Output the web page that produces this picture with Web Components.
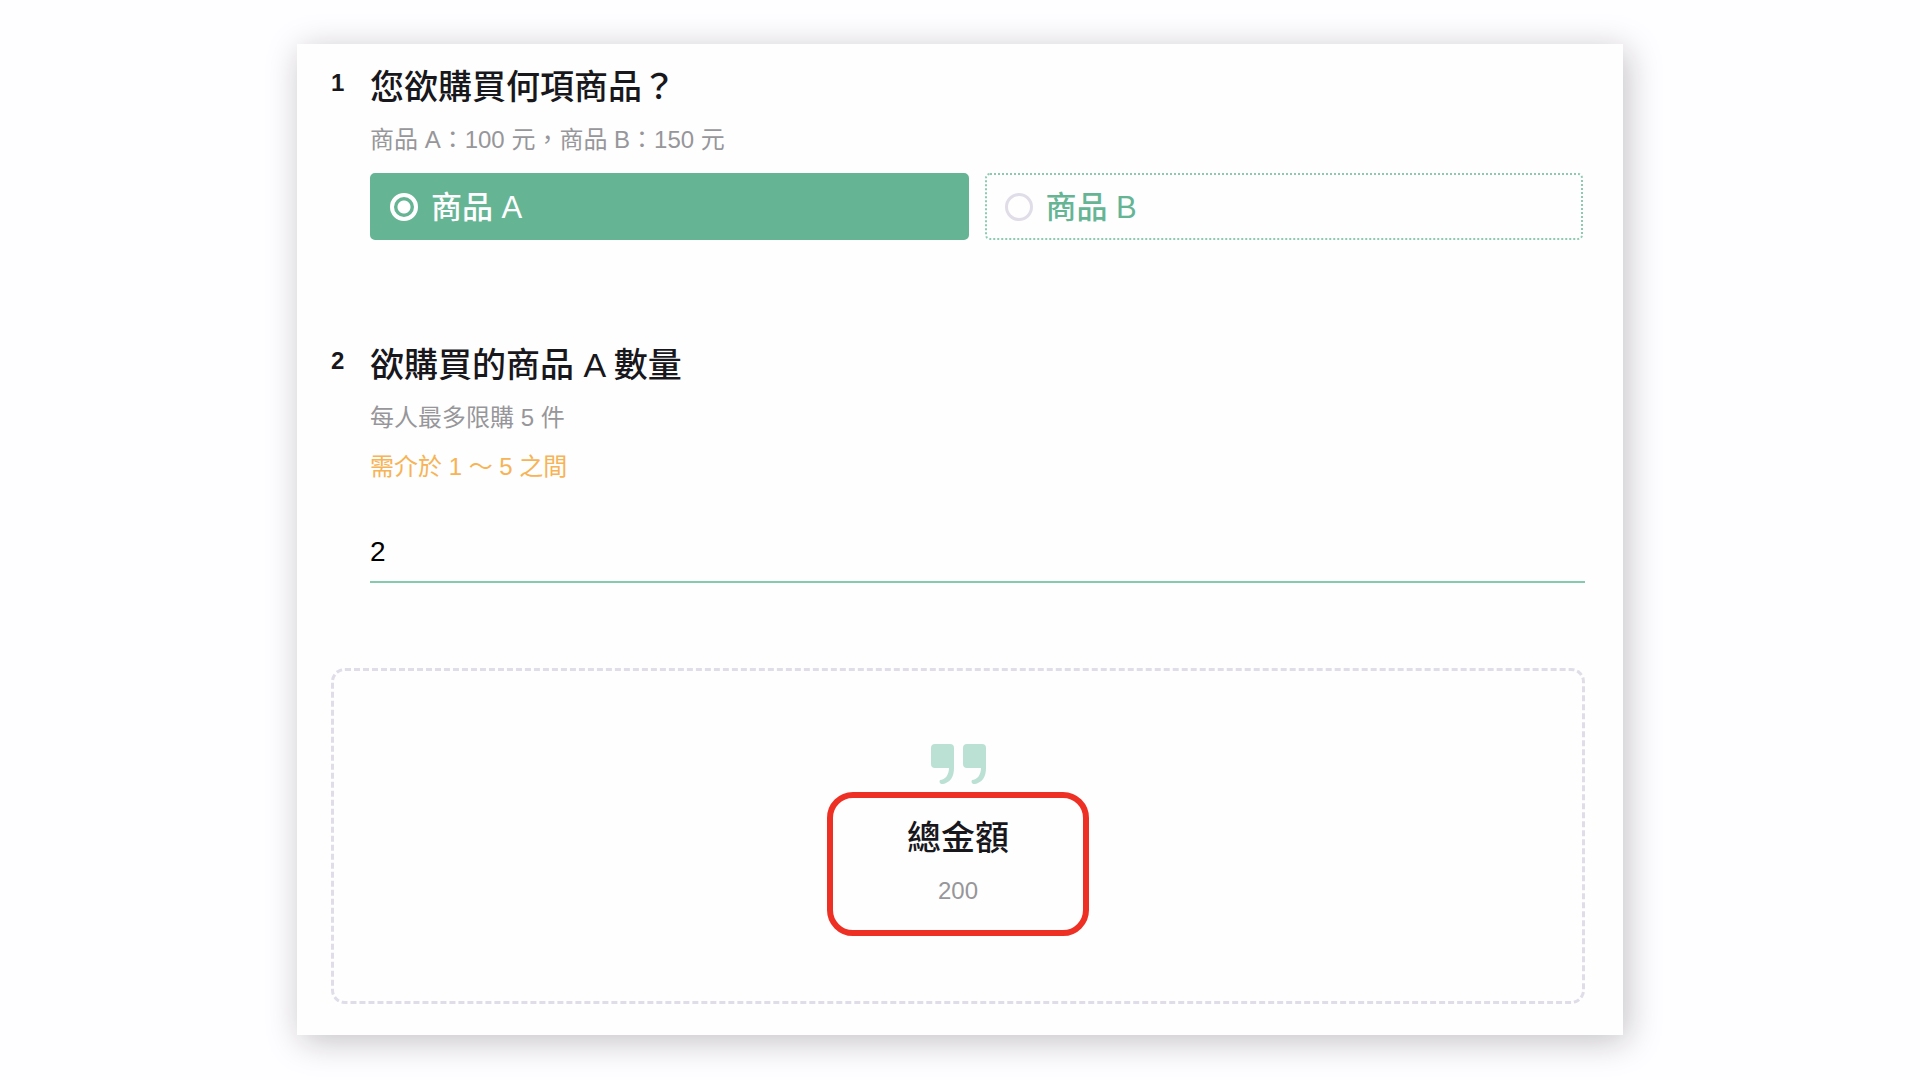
<!DOCTYPE html>
<html lang="zh-Hant">
<head>
<meta charset="utf-8">
<meta name="viewport" content="width=device-width, initial-scale=1">
<title>商品訂購</title>
<style>
  body {
    margin: 0;
    padding: 44px 24px;
    background: #fefdff;
    color: #18171c;
    font-family: "Liberation Sans", "Noto Sans CJK TC", sans-serif;
    --green: #65b595;
    --green-light: #bbe0d4;
    --line: #85c9af;
    --dots: #8ccbb2;
    --muted: #97969a;
    --warn: #f7b354;
    --border: #e0dde8;
    --mark: #ee3024;
  }
</style>
</head>
<body>
<order-form>
  <form-question number="1" heading="您欲購買何項商品？" hint="商品 A：100 元，商品 B：150 元">
    <choice-group name="product" label="您欲購買何項商品？" options="商品 A|商品 B" selected="0"></choice-group>
  </form-question>
  <form-question number="2" heading="欲購買的商品 A 數量" hint="每人最多限購 5 件" rule="需介於 1 ～ 5 之間">
    <line-input label="欲購買的商品 A 數量" value="2"></line-input>
  </form-question>
  <quote-box>
    <total-amount heading="總金額">200</total-amount>
  </quote-box>
</order-form>

<script>
  class OrderForm extends HTMLElement {
    constructor() {
      super();
      this.attachShadow({ mode: "open" }).innerHTML = `
        <style>
          :host {
            display: block; box-sizing: border-box; max-width: 1326px; margin: 0 auto;
            padding: 23px 38px 31px 34px; background: #fefefe;
            box-shadow: 4px 6px 32px rgba(20, 15, 25, .25);
          }
          form { display: flex; flex-direction: column; }
        </style>
        <form><slot></slot></form>`;
    }
  }

  class FormQuestion extends HTMLElement {
    connectedCallback() {
      const rule = this.getAttribute("rule");
      this.attachShadow({ mode: "open" }).innerHTML = `
        <style>
          :host { display: flex; margin-bottom: 105px; }
          :host([rule]) { margin-bottom: 85px; }
          .number { flex: 0 0 39px; font-size: 24px; line-height: 32px; font-weight: 700; }
          .body { flex: 1; min-width: 0; display: flex; flex-direction: column; gap: 17px; }
          h2, p { margin: 0; font-weight: 400; }
          h2 { font-size: 34px; line-height: 40px; font-weight: 500; }
          p { font-size: 24px; line-height: 32px; color: var(--muted); }
          .rule { color: var(--warn); }
        </style>
        <span class="number">${this.getAttribute("number")}</span>
        <div class="body">
          <h2>${this.getAttribute("heading")}</h2>
          <p>${this.getAttribute("hint")}</p>
          ${rule ? `<p class="rule">${rule}</p>` : ""}
          <slot></slot>
        </div>`;
    }
  }

  class ChoiceGroup extends HTMLElement {
    connectedCallback() {
      const selected = Number(this.getAttribute("selected"));
      const name = this.getAttribute("name");
      const items = this.getAttribute("options").split("|").map((text, i) => `
        <label for="${name}${i}">
          <input type="radio" id="${name}${i}" name="${name}" ${i === selected ? "checked" : ""}>
          <span>${text}</span>
        </label>`).join("");
      this.attachShadow({ mode: "open" }).innerHTML = `
        <style>
          :host { display: block; }
          .group { display: grid; grid-template-columns: 1fr 1fr; gap: 16px; margin-right: 2px; }
          label {
            display: flex; align-items: center; gap: 13px; box-sizing: border-box; height: 67px;
            padding: 0 18px; border: 2px dotted var(--dots); border-radius: 5px;
            color: var(--green); font-size: 31px; line-height: 36px; font-weight: 500; cursor: pointer;
          }
          label:has(:checked) { background: var(--green); border: 2px solid var(--green); color: #fff; }
          span { padding-top: 3px; }
          input {
            appearance: none; flex: none; box-sizing: border-box; width: 28px; height: 28px;
            margin: 0; border: 3px solid var(--border); border-radius: 50%;
          }
          input:checked {
            border: 4px solid #fff;
            background: radial-gradient(circle, #fff 6px, transparent 7px);
          }
        </style>
        <div class="group" role="radiogroup" aria-label="${this.getAttribute("label")}">${items}</div>`;
    }
  }

  class LineInput extends HTMLElement {
    connectedCallback() {
      this.attachShadow({ mode: "open" }).innerHTML = `
        <style>
          :host { display: block; margin-top: 20px; }
          input {
            display: block; box-sizing: border-box; width: 100%; height: 63px; padding: 2px 0 0;
            border: 0; border-bottom: 2px solid var(--line); outline: 0; background: none;
            font: 28px/32px "Liberation Sans", sans-serif; color: #000;
          }
        </style>
        <input type="text" inputmode="numeric" aria-label="${this.getAttribute("label")}" value="${this.getAttribute("value")}">`;
    }
  }

  class QuoteBox extends HTMLElement {
    constructor() {
      super();
      this.attachShadow({ mode: "open" }).innerHTML = `
        <style>
          :host {
            display: flex; flex-direction: column; align-items: center; gap: 8px;
            padding: 73px 0 65px; border: 3px dashed var(--border); border-radius: 14px;
          }
          svg { display: block; width: 55px; height: 40px; fill: var(--green-light); }
        </style>
        <svg viewBox="0 0 55 40" aria-hidden="true">
          <path d="M4 0H19Q23 0 23 4V24C23 32 20 37 15 39C12 41 7 40 9 36C14 36 18 31 18 24H4Q0 24 0 20V4Q0 0 4 0Z"/>
          <path transform="translate(32 0)" d="M4 0H19Q23 0 23 4V24C23 32 20 37 15 39C12 41 7 40 9 36C14 36 18 31 18 24H4Q0 24 0 20V4Q0 0 4 0Z"/>
        </svg>
        <slot></slot>`;
    }
  }

  class TotalAmount extends HTMLElement {
    connectedCallback() {
      this.attachShadow({ mode: "open" }).innerHTML = `
        <style>
          :host {
            display: flex; flex-direction: column; align-items: center; gap: 17px;
            padding: 20px 74px 23px; border: 6px solid var(--mark); border-radius: 26px;
          }
          h2, p { margin: 0; font-weight: 400; }
          h2 { font-size: 34px; line-height: 40px; font-weight: 500; }
          p { font-size: 24px; line-height: 32px; color: var(--muted); }
        </style>
        <h2>${this.getAttribute("heading")}</h2>
        <p><slot></slot></p>`;
    }
  }

  customElements.define("order-form", OrderForm);
  customElements.define("form-question", FormQuestion);
  customElements.define("choice-group", ChoiceGroup);
  customElements.define("line-input", LineInput);
  customElements.define("quote-box", QuoteBox);
  customElements.define("total-amount", TotalAmount);
</script>
</body>
</html>
